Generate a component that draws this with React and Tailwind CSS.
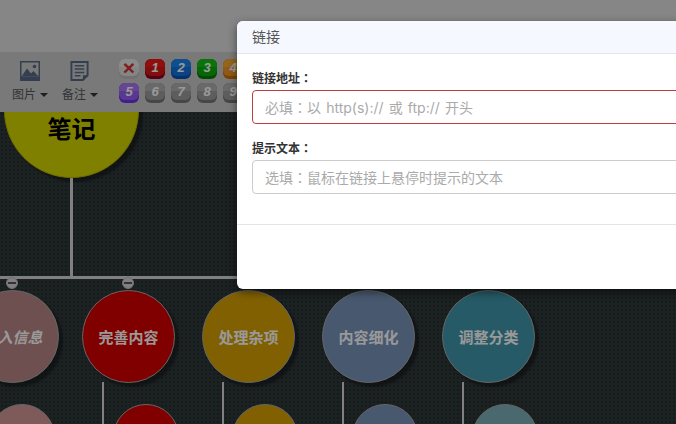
import React from "react";

const grayBadge = "bg-[linear-gradient(#b0b0b0_50%,#9c9c9c_50%)] text-white";

const badges = [
  { label: "×", cls: "bg-[linear-gradient(#e8e8e8_50%,#dedede_50%)] text-[#d53030] not-italic text-[21px]", lip: "bg-[#bcbcbc]" },
  { label: "1", cls: "bg-[linear-gradient(#f01818_50%,#d81616_50%)] text-white", lip: "bg-[#8e0023]" },
  { label: "2", cls: "bg-[linear-gradient(#1a84ee_50%,#1470e0_50%)] text-white", lip: "bg-[#0a50b0]" },
  { label: "3", cls: "bg-[linear-gradient(#12c012_50%,#0aac0a_50%)] text-white", lip: "bg-[#077b07]" },
  { label: "4", cls: "bg-[linear-gradient(#f8a830_50%,#ee9428_50%)] text-white", lip: "bg-[#cc6e0d]" },
  { label: "5", cls: "bg-[linear-gradient(#a875f4_50%,#9460f0_50%)] text-white", lip: "bg-[#6b34e6]" },
  { label: "6", cls: grayBadge, lip: "bg-[#767676]" },
  { label: "7", cls: grayBadge, lip: "bg-[#767676]" },
  { label: "8", cls: grayBadge, lip: "bg-[#767676]" },
  { label: "9", cls: grayBadge, lip: "bg-[#767676]" },
];

const mainNodes = [
  { text: "录入信息", pos: "left-[-34px]", color: "bg-[#b98585] italic" },
  { text: "完善内容", pos: "left-[82px]", color: "bg-[#d50000]" },
  { text: "处理杂项", pos: "left-[202px]", color: "bg-[#d5a000]" },
  { text: "内容细化", pos: "left-[322px]", color: "bg-[#7893ba]" },
  { text: "调整分类", pos: "left-[442px]", color: "bg-[#3f96aa]" },
];

const subNodes = [
  { pos: "left-[-11px]", color: "bg-[#d49696]" },
  { pos: "left-[113px]", color: "bg-[#d50000]" },
  { pos: "left-[232px]", color: "bg-[#d5a000]" },
  { pos: "left-[352px]", color: "bg-[#7893ba]" },
  { pos: "left-[472px]", color: "bg-[#7cb0ba]" },
];

const stems = ["left-[102px]", "left-[222px]", "left-[342px]", "left-[462px]"];
const toggles = ["left-[6px]", "left-[122px]"];

function ToolButton({ icon, label }) {
  return (
    <div className="flex w-[36px] flex-col items-center">
      {icon}
      <div className="mt-[5px] flex items-center gap-[4px] text-[12px] leading-[18px] whitespace-nowrap text-[#555]">
        {label}
        <span className="h-0 w-0 border-x-[4px] border-t-[4px] border-x-transparent border-t-[#333]" />
      </div>
    </div>
  );
}

function Badge({ item }) {
  return (
    <div className={`h-[20px] w-[20px] rounded-[6px] ${item.lip}`}>
      <div className={`flex h-[17px] w-[20px] items-center justify-center rounded-[6px] text-[13px] font-bold italic leading-none ${item.cls}`}>
        {item.label}
      </div>
    </div>
  );
}

function Field({ label, placeholder, invalid }) {
  return (
    <div className="mb-[15px]">
      <div className="mb-[4px] h-[17px] text-[12px] font-bold leading-[17px] text-[#333]">
        {label}
        <span className="font-['Noto_Sans_CJK_TC',sans-serif]">：</span>
      </div>
      <input
        readOnly
        placeholder={placeholder}
        className={`block h-[34px] w-full rounded-[4px] border px-[12px] font-['Inter','Noto_Sans_CJK_TC',sans-serif] text-[14px] [word-spacing:1.2px] outline-none placeholder:text-[#aaaaaa] ${
          invalid ? "border-[#c33c3c]" : "border-[#cccccc]"
        }`}
      />
    </div>
  );
}

export default function App() {
  return (
    <div className="relative flex h-[424px] w-[676px] flex-col overflow-hidden font-['Open_Sans','Noto_Sans_CJK_SC',sans-serif]">
      <div className="h-[52px] shrink-0 bg-[#e0e0e0]" />

      <div className="relative z-10 flex h-[60px] shrink-0 items-start bg-[#cacaca] pt-[9px]">
        <div className="ml-[12px] flex gap-[14px]">
          <ToolButton
            label="图片"
            icon={
              <svg width="20" height="20" viewBox="0 0 20 20">
                <path fill="#556884" fillRule="evenodd" d="M0 0h20v20H0zM1.5 1.5v14h17v-14z" />
                <circle cx="14.5" cy="5.5" r="1.8" fill="#556884" />
                <path fill="#556884" d="M1.5 15.5l5.5-8 4 5 2.5-2.5 5 5.5z" />
              </svg>
            }
          />
          <ToolButton
            label="备注"
            icon={
              <svg width="20" height="20" viewBox="0 0 20 21">
                <path fill="none" stroke="#556884" strokeWidth="2" d="M1 1h17v14l-5 5H1z" />
                <path fill="#556884" d="M13 20v-5h5z" />
                <path stroke="#556884" strokeWidth="1.6" d="M4.5 5h10M4.5 8.5h10M4.5 12h10M4.5 15.5h6" />
              </svg>
            }
          />
        </div>
        <div className="ml-[21px] mt-[-2px] grid grid-cols-[repeat(5,20px)] gap-x-[6px] gap-y-[4px] font-['Liberation_Sans',sans-serif]">
          {badges.map((item) => (
            <Badge key={item.label} item={item} />
          ))}
        </div>
      </div>

      <div className="relative flex-1 overflow-hidden bg-[#2f373a] bg-[radial-gradient(#262c2f_1px,transparent_1px)] bg-[length:4px_4px]">
        <div className="absolute left-[4px] top-[-69px] flex h-[135px] w-[135px] items-end justify-center rounded-full border border-[#b5b500] bg-[#d5d500] pb-[30px] text-[24px] font-bold leading-[36px] text-black shadow-[4px_4px_2px_rgba(0,0,0,0.35)]">
          笔记
        </div>
        <div className="absolute left-[70px] top-[66px] h-[98px] w-[3px] bg-[#d5d5d5]" />
        <div className="absolute left-0 top-[164px] h-[3px] w-[676px] bg-[#d5d5d5]" />

        {toggles.map((pos) => (
          <div key={pos} className={`absolute top-[165px] flex h-[12px] w-[12px] items-center justify-center rounded-full border border-[#bbbbbb] bg-[#d5d5d5] ${pos}`}>
            <span className="h-[2px] w-[8px] bg-[#555]" />
          </div>
        ))}

        {stems.map((pos) => (
          <div key={pos} className={`absolute top-[270px] h-[42px] w-[2px] bg-[#d5d5d5] ${pos}`} />
        ))}

        {mainNodes.map((node) => (
          <div
            key={node.text}
            className={`absolute top-[178px] flex h-[93px] w-[93px] items-center justify-center rounded-full border border-[#aaaaaa] pt-[1px] text-[15px] font-bold leading-[22px] text-white shadow-[4px_4px_2px_rgba(0,0,0,0.35)] ${node.pos} ${node.color}`}
          >
            {node.text}
          </div>
        ))}

        {subNodes.map((node) => (
          <div key={node.pos} className={`absolute top-[292px] h-[66px] w-[66px] rounded-full border border-[#aaaaaa] ${node.pos} ${node.color}`} />
        ))}
      </div>

      <div className="absolute inset-0 z-20 bg-black/40" />

      <div className="absolute left-[237px] top-[21px] z-30 h-[268px] w-[600px] rounded-[6px] bg-white shadow-[0_3px_9px_rgba(0,0,0,0.5)]">
        <div className="h-[33px] rounded-t-[6px] border-b border-[#e5e5e5] bg-[#f5f9ff] px-[15px] text-[14px] leading-[32px] text-[#555]">
          链接
        </div>
        <div className="h-[171px] border-b border-[#e5e5e5] px-[15px] pt-[15px]">
          <Field label="链接地址" placeholder="必填：以 http(s):// 或 ftp:// 开头" invalid />
          <Field label="提示文本" placeholder="选填：鼠标在链接上悬停时提示的文本" />
        </div>
      </div>
    </div>
  );
}
